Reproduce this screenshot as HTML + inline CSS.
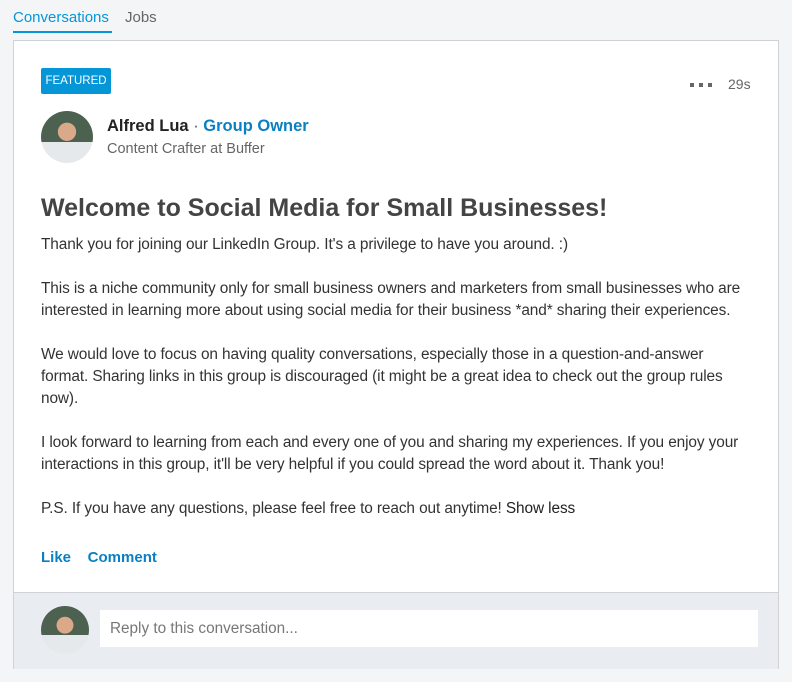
<!DOCTYPE html>
<html><head><style>
*{margin:0;padding:0;box-sizing:border-box}
body{width:792px;height:682px;background:#f4f5f7;font-family:"Liberation Sans",sans-serif;position:relative;overflow:hidden;color:#333}
.tab{position:absolute;top:9px;font-size:15px}
.card{position:absolute;left:13px;top:40px;width:766px;height:629px;background:#fff;border:1px solid #cfd3d7}
.feat{position:absolute;left:27px;top:27px;width:70px;height:26px;background:#0596d8;color:#fff;font-size:11.5px;line-height:26px;text-align:center;border-radius:2px}
.av{position:absolute;border-radius:50%;background:radial-gradient(circle at 50% 40%,#d9a98a 0 22%,transparent 23%),linear-gradient(#4d6150 0 60%,#e6e9ec 60%)}
.p{position:absolute;left:27px;font-size:15.4px;line-height:22px;color:#333;white-space:nowrap;letter-spacing:-0.1px}
</style></head><body>
<div class="tab" style="left:13px;color:#0596d8">Conversations</div>
<div style="position:absolute;left:13px;top:31px;width:99px;height:2px;background:#0596d8"></div>
<div class="tab" style="left:125px;color:#666">Jobs</div>
<div class="card">
<div class="feat">FEATURED</div>
<div style="position:absolute;left:676px;top:42px;width:22px;height:4px;background:repeating-linear-gradient(90deg,#666 0 4px,transparent 4px 9px)"></div>
<div style="position:absolute;left:714px;top:35px;font-size:14px;color:#666">29s</div>
<div class="av" style="left:27px;top:70px;width:52px;height:52px"></div>
<div style="position:absolute;left:93px;top:76px;font-size:16.5px;font-weight:bold;color:#222">Alfred Lua <span style="font-weight:normal;color:#555">·</span> <span style="color:#0a80c2">Group Owner</span></div>
<div style="position:absolute;left:93px;top:100px;font-size:14.5px;color:#666">Content Crafter at Buffer</div>
<div style="position:absolute;left:27px;top:153px;font-size:25px;font-weight:bold;color:#444">Welcome to Social Media for Small Businesses!</div>
<div class="p" style="top:193px">Thank you for joining our LinkedIn Group. It's a privilege to have you around. :)</div>
<div class="p" style="top:237px">This is a niche community only for small business owners and marketers from small businesses who are<br>interested in learning more about using social media for their business *and* sharing their experiences.</div>
<div class="p" style="top:303px">We would love to focus on having quality conversations, especially those in a question-and-answer<br>format. Sharing links in this group is discouraged (it might be a great idea to check out the group rules<br>now).</div>
<div class="p" style="top:391px">I look forward to learning from each and every one of you and sharing my experiences. If you enjoy your<br>interactions in this group, it'll be very helpful if you could spread the word about it. Thank you!</div>
<div class="p" style="top:457px">P.S. If you have any questions, please feel free to reach out anytime! <span style="color:#222">Show less</span></div>
<div style="position:absolute;left:27px;top:508px;font-size:15px;font-weight:bold;color:#0a80c2">Like&nbsp;&nbsp;&nbsp; Comment</div>
<div style="position:absolute;left:0;top:551px;width:764px;height:77px;background:#e9ecf0;border-top:1px solid #cfd3d7">
<div class="av" style="left:27px;top:13px;width:48px;height:48px"></div>
<div style="position:absolute;left:86px;top:17px;width:658px;height:37px;background:#fff;font-size:15.3px;color:#777;line-height:37px;padding-left:10px">Reply to this conversation...</div>
</div>
</div>
</body></html>
